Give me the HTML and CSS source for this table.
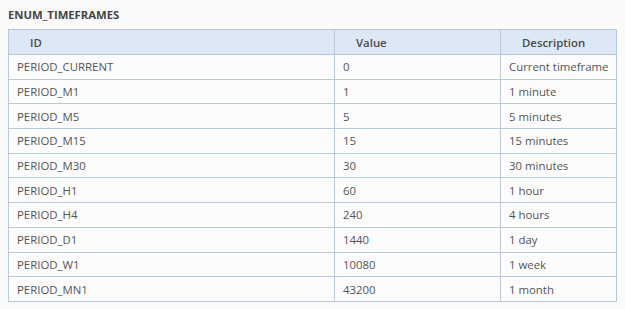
FILE: index.html
```html
<!DOCTYPE html>
<html>
<head>
<meta charset="utf-8">
<link rel="stylesheet" href="styles.css">
</head>
<body>
<div class="page">
  <div class="title">ENUM_TIMEFRAMES</div>
  <table class="enum">
    <colgroup>
      <col class="c-id">
      <col class="c-val">
      <col class="c-desc">
    </colgroup>
    <thead>
      <tr><th>ID</th><th>Value</th><th>Description</th></tr>
    </thead>
    <tbody>
      <tr><td>PERIOD_CURRENT</td><td>0</td><td>Current timeframe</td></tr>
      <tr><td>PERIOD_M1</td><td>1</td><td>1 minute</td></tr>
      <tr><td>PERIOD_M5</td><td>5</td><td>5 minutes</td></tr>
      <tr><td>PERIOD_M15</td><td>15</td><td>15 minutes</td></tr>
      <tr><td>PERIOD_M30</td><td>30</td><td>30 minutes</td></tr>
      <tr><td>PERIOD_H1</td><td>60</td><td>1 hour</td></tr>
      <tr><td>PERIOD_H4</td><td>240</td><td>4 hours</td></tr>
      <tr><td>PERIOD_D1</td><td>1440</td><td>1 day</td></tr>
      <tr><td>PERIOD_W1</td><td>10080</td><td>1 week</td></tr>
      <tr><td>PERIOD_MN1</td><td>43200</td><td>1 month</td></tr>
    </tbody>
  </table>
</div>
</body>
</html>
```
FILE: styles.css
```css
html, body {
  margin: 0;
  padding: 0;
  background: #fafafa;
}
body {
  font-family: "Open Sans", "DejaVu Sans", sans-serif;
  font-size: 11.4px;
  color: #555;
}
.page {
  padding: 8px 9px 0 8px;
}
.title {
  font-weight: bold;
  color: #444;
  font-size: 11.3px;
  line-height: 14px;
  height: 21px;
}
.enum {
  border-collapse: collapse;
  width: 608px;
  table-layout: fixed;
  background: #fcfcfc;
}
.c-id { width: 326px; }
.c-val { width: 166px; }
.c-desc { width: 116px; }
.enum th, .enum td {
  border: 1px solid #b9c9dc;
  text-align: left;
  white-space: nowrap;
  overflow: hidden;
}
.enum th {
  background: #dde8f6;
  color: #4a4a4a;
  font-weight: 600;
  height: 24px;
  padding: 0 0 0 21px;
}
.enum td {
  height: 23.7px;
  padding: 0 0 0 8px;
}
```
